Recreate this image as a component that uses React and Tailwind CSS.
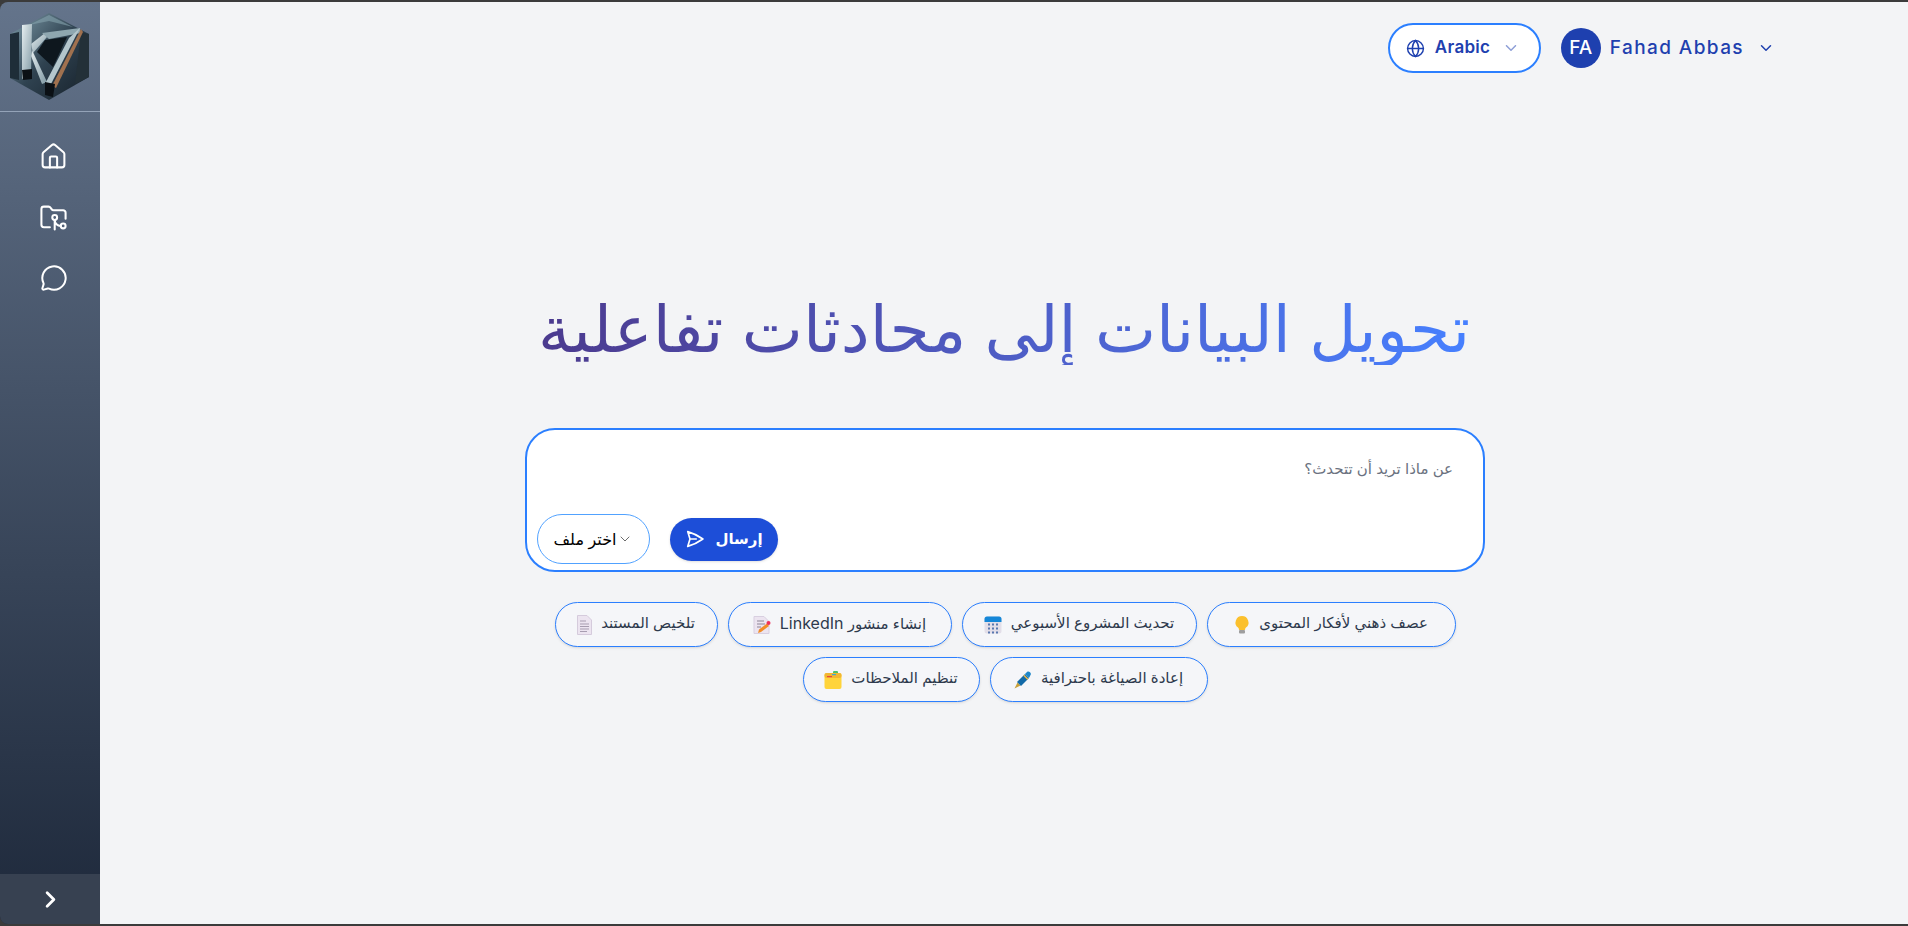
import { House, FolderGit2, MessageCircle, ChevronRight, ChevronDown, Globe } from "lucide-react";
import { HiOutlinePaperAirplane } from "react-icons/hi2";

const ARABIC = "font-['Inter','Liberation_Sans','DejaVu_Sans',sans-serif]";

function Logo() {
  return (
    <svg width="82" height="90" viewBox="0 0 82 90">
      <defs>
        <linearGradient id="hex" x1="0" y1="0" x2="1" y2="1">
          <stop offset="0" stopColor="#7f9dab" />
          <stop offset="0.5" stopColor="#2f4250" />
          <stop offset="1" stopColor="#16202a" />
        </linearGradient>
        <linearGradient id="kk" x1="0" y1="0" x2="1" y2="1">
          <stop offset="0" stopColor="#e6eef0" />
          <stop offset="1" stopColor="#7f98a3" />
        </linearGradient>
      </defs>
      <polygon points="40,1 80,22 80,65 40,88 1,66 1,22" fill="url(#hex)" />
      <polygon points="20,13 40,3 64,15 40,9" fill="#86a3ae" opacity="0.6" />
      <polygon points="1,22 10,20 10,68 1,66" fill="#1e2d38" />
      <polygon points="72,20 80,22 80,65 66,72" fill="#233038" />
      <polygon points="36,28 58,25 44,55 28,40" fill="#0e171e" />
      <polygon points="23,38 38,70 33,72 22,44" fill="url(#kk)" />
      <polygon points="22,32 36,21 38,25 24,41" fill="url(#kk)" />
      <polygon points="13,13 23,12 22,62 13,67" fill="url(#kk)" />
      <polygon points="33,21 71,16 72,21 40,27" fill="#8fa7b0" />
      <polygon points="71,16 42,72 36,72 60,26" fill="#b4c6cc" />
      <polygon points="72,17 74,20 47,76 43,74" fill="#a0714f" />
      <polygon points="13,58 23,57 23,67 14,68" fill="#0b1015" />
      <polygon points="36,70 46,72 44,85 36,83" fill="#0b1015" />
    </svg>
  );
}

function Bulb() {
  return (
    <svg width="16" height="20" viewBox="0 0 16 20">
      <path d="M8 1a6.500 6.500 0 0 0-4 11.600c.7.600 1 1.400 1 2.400h6c0-1 .3-1.800 1-2.400A6.500 6.500 0 0 0 8 1z" fill="#fbc02d" />
      <rect x="5" y="15" width="6" height="3.500" rx="1" fill="#9e9e9e" />
    </svg>
  );
}

function Calendar() {
  return (
    <svg width="18" height="18" viewBox="0 0 18 18">
      <rect x="0.500" y="0.500" width="17" height="17" rx="2.500" fill="#e3dfe9" />
      <path d="M0.500 6V3a2.500 2.500 0 0 1 2.500-2.500h12A2.500 2.500 0 0 1 17.500 3v3z" fill="#1587d8" />
      {[3.500, 7.500, 11.500].map((y) =>
        [4, 8, 12].map((x) => <rect key={`${x}-${y}`} x={x} y={y + 4} width="2" height="2" fill="#5a78b0" />)
      )}
    </svg>
  );
}

function Memo() {
  return (
    <svg width="18" height="20" viewBox="0 0 18 20">
      <path d="M1 1.500h10l5 5v12H1z" fill="#ece4f0" stroke="#d8cfe0" />
      <path d="M4 6h7M4 9h8M4 12h4" stroke="#8d8496" />
      <path d="M5 18l1-3.500 8-6 2 2.500-8 6z" fill="#f28c28" />
      <circle cx="15.500" cy="8" r="2" fill="#f0305a" />
    </svg>
  );
}

function Doc() {
  return (
    <svg width="15" height="20" viewBox="0 0 15 20">
      <path d="M0.500 0.500h9.500l4.500 4.500v14.500h-14z" fill="#ece4f0" stroke="#d5cbdc" />
      <path d="M3 6h6M3 9h9M3 11.500h9M3 14h9M3 16.500h7" stroke="#a79db0" />
    </svg>
  );
}

function Pen() {
  return (
    <svg width="18" height="18" viewBox="0 0 18 18">
      <path d="M0.500 17.500l3-6 3 3z" fill="#c9a13a" />
      <path d="M3 11l8-8 4 4-8 8z" fill="#126aa8" />
      <path d="M11 3l2-2c1-.8 2-.6 3 .3s1.200 2 .4 3l-1.400 2.700z" fill="#1c86c8" />
      <path d="M9.800 4.200l4 4" stroke="#e9b949" strokeWidth="1.500" />
    </svg>
  );
}

function Folder() {
  return (
    <svg width="18" height="18" viewBox="0 0 18 18">
      <rect x="9" y="0" width="5" height="4" rx="1" fill="#4cc268" />
      <rect x="0.500" y="2" width="17" height="16" rx="2" fill="#ffd43b" />
      <rect x="0.500" y="2" width="17" height="5" rx="2" fill="#f2b632" />
      <rect x="3" y="5" width="5" height="1.200" fill="#e8453c" />
      <rect x="8" y="3" width="4" height="1.200" fill="#3fa9d6" />
    </svg>
  );
}

function Chip({ icon, className, children }) {
  return (
    <button className={`flex h-[45px] items-center justify-center gap-[9px] rounded-full border border-blue-500 bg-[#f5f6f9] text-[15px] text-[#2e3a4d] shadow-sm ${className}`}>
      <span className="pb-[2px]">{children}</span>
      {icon}
    </button>
  );
}

export default function App() {
  return (
    <div className={`flex h-[926px] overflow-hidden bg-[#3b3b3b] pt-[2px] pb-[2px] ${ARABIC}`}>
      <aside className="flex w-[100px] shrink-0 flex-col overflow-hidden rounded-tl-[8px] rounded-bl-[8px] bg-gradient-to-b from-[#64748b] to-[#1e293b]">
        <div className="flex h-[110px] items-center justify-center border-b border-[#94a3b8]">
          <Logo />
        </div>
        <nav className="flex flex-1 flex-col items-center gap-[32px] pt-[30px] pl-[7px] text-white">
          <House size={29} strokeWidth={1.7} />
          <FolderGit2 size={29} strokeWidth={1.7} />
          <MessageCircle size={28} strokeWidth={1.7} />
        </nav>
        <div className="flex h-[50px] items-center justify-center bg-[#374151] text-white">
          <ChevronRight size={27} strokeWidth={2.5} />
        </div>
      </aside>

      <main className="flex min-w-0 flex-1 flex-col items-center bg-[#f3f4f6]">
        <header className="flex w-full items-center justify-end gap-[20px] pt-[21px] pr-[133px]">
          <button className="flex h-[50px] w-[153px] items-center gap-[10px] rounded-full border-2 border-blue-500 bg-white pl-[16px] text-[#1e40af]">
            <Globe size={19} strokeWidth={1.8} />
            <span className="text-[17px] font-semibold tracking-[0.3px]">Arabic</span>
            <ChevronDown size={18} className="ml-[2px] opacity-50" />
          </button>
          <div className="flex items-center text-[#1e40af]">
            <span className="mr-[9px] flex h-[40px] w-[40px] items-center justify-center rounded-full bg-[#1e40af] text-[19px] font-medium text-white">FA</span>
            <span className="text-[19px] font-medium tracking-[1.4px]">Fahad Abbas</span>
            <ChevronDown size={18} className="ml-[13px]" />
          </div>
        </header>

        <h1 dir="rtl" className="mt-[220px] bg-gradient-to-l from-[#4680ff] to-[#4b3a8e] bg-clip-text text-[65px] leading-[72px] text-transparent">
          تحويل البيانات إلى محادثات تفاعلية
        </h1>

        <div dir="rtl" className="mt-[63px] ml-[2px] flex h-[144px] w-[960px] flex-col justify-between rounded-[30px] border-2 border-blue-500 bg-white pt-[29px] pr-[30px] pb-[6px] pl-[10px]">
          <p className="text-[15px] leading-[20px] text-[#6b7280]">عن ماذا تريد أن تتحدث؟</p>
          <div className="flex items-center justify-end gap-[20px]">
            <button className="flex h-[43px] w-[108px] items-center justify-center gap-[10px] rounded-full bg-[#1d4ed8] text-[15px] font-bold text-white shadow-sm">
              <span>إرسال</span>
              <HiOutlinePaperAirplane size={20} strokeWidth={2} />
            </button>
            <button className="flex h-[50px] w-[113px] items-center justify-center gap-[1px] rounded-full border border-blue-400 bg-white text-[16px] text-black">
              <ChevronDown size={16} strokeWidth={1.3} className="text-[#555]" />
              <span>اختر ملف</span>
            </button>
          </div>
        </div>

        <div dir="rtl" className="mt-[30px] ml-[2px] flex w-[960px] flex-wrap justify-center gap-x-[10px] gap-y-[10px]">
          <Chip className="w-[249px]" icon={<Bulb />}>عصف ذهني لأفكار المحتوى</Chip>
          <Chip className="w-[235px]" icon={<Calendar />}>تحديث المشروع الأسبوعي</Chip>
          <Chip className="w-[224px]" icon={<Memo />}>إنشاء منشور <span className="text-[16px]">LinkedIn</span></Chip>
          <Chip className="w-[163px]" icon={<Doc />}>تلخيص المستند</Chip>
          <Chip className="w-[218px]" icon={<Pen />}>إعادة الصياغة باحترافية</Chip>
          <Chip className="w-[177px]" icon={<Folder />}>تنظيم الملاحظات</Chip>
        </div>
      </main>
    </div>
  );
}
